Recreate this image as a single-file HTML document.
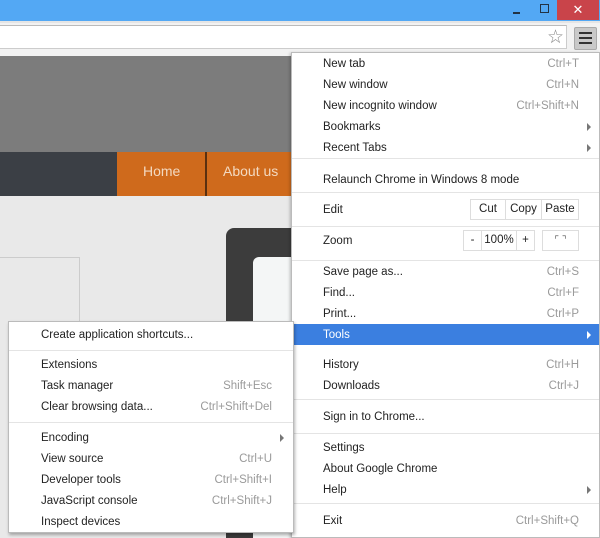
<!DOCTYPE html>
<html><head><style>
*{margin:0;padding:0;box-sizing:border-box}
body{width:600px;height:538px;overflow:hidden;position:relative;font-family:"Liberation Sans",sans-serif;font-size:11.5px;color:#222;background:#ebebeb}
.a{position:absolute}
.m div.i{position:absolute;left:0;right:0;height:21px;line-height:23px}
.t{position:absolute}
.k{position:absolute;color:#9a9a9a}
.sep{position:absolute;height:1px;background:#e4e4e4}
.arr{position:absolute;width:0;height:0;border-top:4px solid transparent;border-bottom:4px solid transparent;border-left:4px solid #777}
.btn{position:absolute;border:1px solid #ddd;background:#fff;text-align:center;line-height:19px;height:21px}
</style></head><body>
<div class="a" style="left:0;top:0;width:600px;height:21px;background:#53a8f4"></div>
<div class="a" style="left:557px;top:0;width:42px;height:20px;background:#c9444a;color:#fff;text-align:center;font-size:13px;line-height:20px">✕</div>
<div class="a" style="left:513px;top:12px;width:7px;height:2px;background:#234"></div>
<div class="a" style="left:540px;top:4px;width:9px;height:9px;border:1.5px solid #234"></div>
<div class="a" style="left:0;top:21px;width:600px;height:35px;background:#f2f2f2;border-top:2px solid #e5e5e5"></div>
<div class="a" style="left:0;top:25px;width:567px;height:24px;background:#fff;border-top:1px solid #bbb;border-bottom:1px solid #ccc;border-right:1px solid #ccc"></div>
<div class="a" style="left:547px;top:26px;font-size:19px;color:#888">☆</div>
<div class="a" style="left:574px;top:27px;width:23px;height:23px;background:#c9c9c9;border:1px solid #aaa;border-radius:2px"></div>
<div class="a" style="left:579px;top:32px;width:13px;height:2px;background:#333;box-shadow:0 5px 0 #333,0 10px 0 #333"></div>
<div class="a" style="left:0;top:56px;width:300px;height:96px;background:#7c7c7c"></div>
<div class="a" style="left:0;top:152px;width:117px;height:44px;background:#3b3f45"></div>
<div class="a" style="left:117px;top:152px;width:180px;height:44px;background:#cf6a1c"></div>
<div class="a" style="left:205px;top:152px;width:2px;height:44px;background:#5a3010"></div>
<div class="a" style="left:143px;top:163px;color:#f3d9c0;font-size:14px">Home</div>
<div class="a" style="left:223px;top:163px;color:#f3d9c0;font-size:14px">About us</div>
<div class="a" style="left:0;top:196px;width:300px;height:342px;background:#e9e9e9"></div>
<div class="a" style="left:0;top:257px;width:80px;height:70px;border-top:1px solid #ccc;border-right:1px solid #ccc"></div>
<div class="a" style="left:226px;top:228px;width:70px;height:310px;background:#3c3c3c;border-radius:8px 0 0 0"></div>
<div class="a" style="left:253px;top:257px;width:43px;height:281px;background:#f4f6f6;border-radius:6px 0 0 0"></div>
<div class="a m" style="left:291px;top:52px;width:309px;height:486px;background:#fff;border:1px solid #bbb;box-shadow:-1px 1px 3px rgba(0,0,0,.25)">
<div class="i" style="top:0px"><span class="t" style="left:31px">New tab</span><span class="k" style="right:20px">Ctrl+T</span></div>
<div class="i" style="top:21px"><span class="t" style="left:31px">New window</span><span class="k" style="right:20px">Ctrl+N</span></div>
<div class="i" style="top:42px"><span class="t" style="left:31px">New incognito window</span><span class="k" style="right:20px">Ctrl+Shift+N</span></div>
<div class="i" style="top:63px"><span class="t" style="left:31px">Bookmarks</span><span class="arr" style="right:8px;top:7px"></span></div>
<div class="i" style="top:84px"><span class="t" style="left:31px">Recent Tabs</span><span class="arr" style="right:8px;top:7px"></span></div>
<div class="sep" style="left:0;right:0;top:105px"></div>
<div class="i" style="top:116px"><span class="t" style="left:31px">Relaunch Chrome in Windows 8 mode</span></div>
<div class="sep" style="left:0;right:0;top:139px"></div>
<div class="i" style="top:146px"><span class="t" style="left:31px">Edit</span></div>
<div class="btn" style="left:178px;top:146px;width:36px">Cut</div>
<div class="btn" style="left:213px;top:146px;width:37px">Copy</div>
<div class="btn" style="left:249px;top:146px;width:38px">Paste</div>
<div class="sep" style="left:0;right:0;top:173px"></div>
<div class="i" style="top:177px"><span class="t" style="left:31px">Zoom</span></div>
<div class="btn" style="left:171px;top:177px;width:19px">-</div>
<div class="btn" style="left:189px;top:177px;width:36px">100%</div>
<div class="btn" style="left:224px;top:177px;width:19px">+</div>
<div class="btn" style="left:250px;top:177px;width:37px;color:#666;font-size:10px">⌜ ⌝</div>
<div class="sep" style="left:0;right:0;top:207px"></div>
<div class="i" style="top:208px"><span class="t" style="left:31px">Save page as...</span><span class="k" style="right:20px">Ctrl+S</span></div>
<div class="i" style="top:229px"><span class="t" style="left:31px">Find...</span><span class="k" style="right:20px">Ctrl+F</span></div>
<div class="i" style="top:250px"><span class="t" style="left:31px">Print...</span><span class="k" style="right:20px">Ctrl+P</span></div>
<div class="i" style="top:271px;left:1px;background:#3b7fe0;color:#fff"><span class="t" style="left:30px">Tools</span><span class="arr" style="right:8px;top:7px;border-left-color:#fff"></span></div>
<div class="i" style="top:301px"><span class="t" style="left:31px">History</span><span class="k" style="right:20px">Ctrl+H</span></div>
<div class="i" style="top:322px"><span class="t" style="left:31px">Downloads</span><span class="k" style="right:20px">Ctrl+J</span></div>
<div class="sep" style="left:0;right:0;top:346px"></div>
<div class="i" style="top:353px"><span class="t" style="left:31px">Sign in to Chrome...</span></div>
<div class="sep" style="left:0;right:0;top:380px"></div>
<div class="i" style="top:384px"><span class="t" style="left:31px">Settings</span></div>
<div class="i" style="top:405px"><span class="t" style="left:31px">About Google Chrome</span></div>
<div class="i" style="top:426px"><span class="t" style="left:31px">Help</span><span class="arr" style="right:8px;top:7px"></span></div>
<div class="sep" style="left:0;right:0;top:450px"></div>
<div class="i" style="top:457px"><span class="t" style="left:31px">Exit</span><span class="k" style="right:20px">Ctrl+Shift+Q</span></div>
</div>
<div class="a m" style="left:8px;top:321px;width:286px;height:212px;background:#fff;border:1px solid #bbb;box-shadow:1px 2px 3px rgba(0,0,0,.3)">
<div class="i" style="top:2px"><span class="t" style="left:32px">Create application shortcuts...</span></div>
<div class="sep" style="left:0;right:0;top:28px"></div>
<div class="i" style="top:32px"><span class="t" style="left:32px">Extensions</span></div>
<div class="i" style="top:53px"><span class="t" style="left:32px">Task manager</span><span class="k" style="right:21px">Shift+Esc</span></div>
<div class="i" style="top:74px"><span class="t" style="left:32px">Clear browsing data...</span><span class="k" style="right:21px">Ctrl+Shift+Del</span></div>
<div class="sep" style="left:0;right:0;top:100px"></div>
<div class="i" style="top:105px"><span class="t" style="left:32px">Encoding</span><span class="arr" style="right:9px;top:7px"></span></div>
<div class="i" style="top:126px"><span class="t" style="left:32px">View source</span><span class="k" style="right:21px">Ctrl+U</span></div>
<div class="i" style="top:147px"><span class="t" style="left:32px">Developer tools</span><span class="k" style="right:21px">Ctrl+Shift+I</span></div>
<div class="i" style="top:168px"><span class="t" style="left:32px">JavaScript console</span><span class="k" style="right:21px">Ctrl+Shift+J</span></div>
<div class="i" style="top:189px"><span class="t" style="left:32px">Inspect devices</span></div>
</div>
</body></html>
